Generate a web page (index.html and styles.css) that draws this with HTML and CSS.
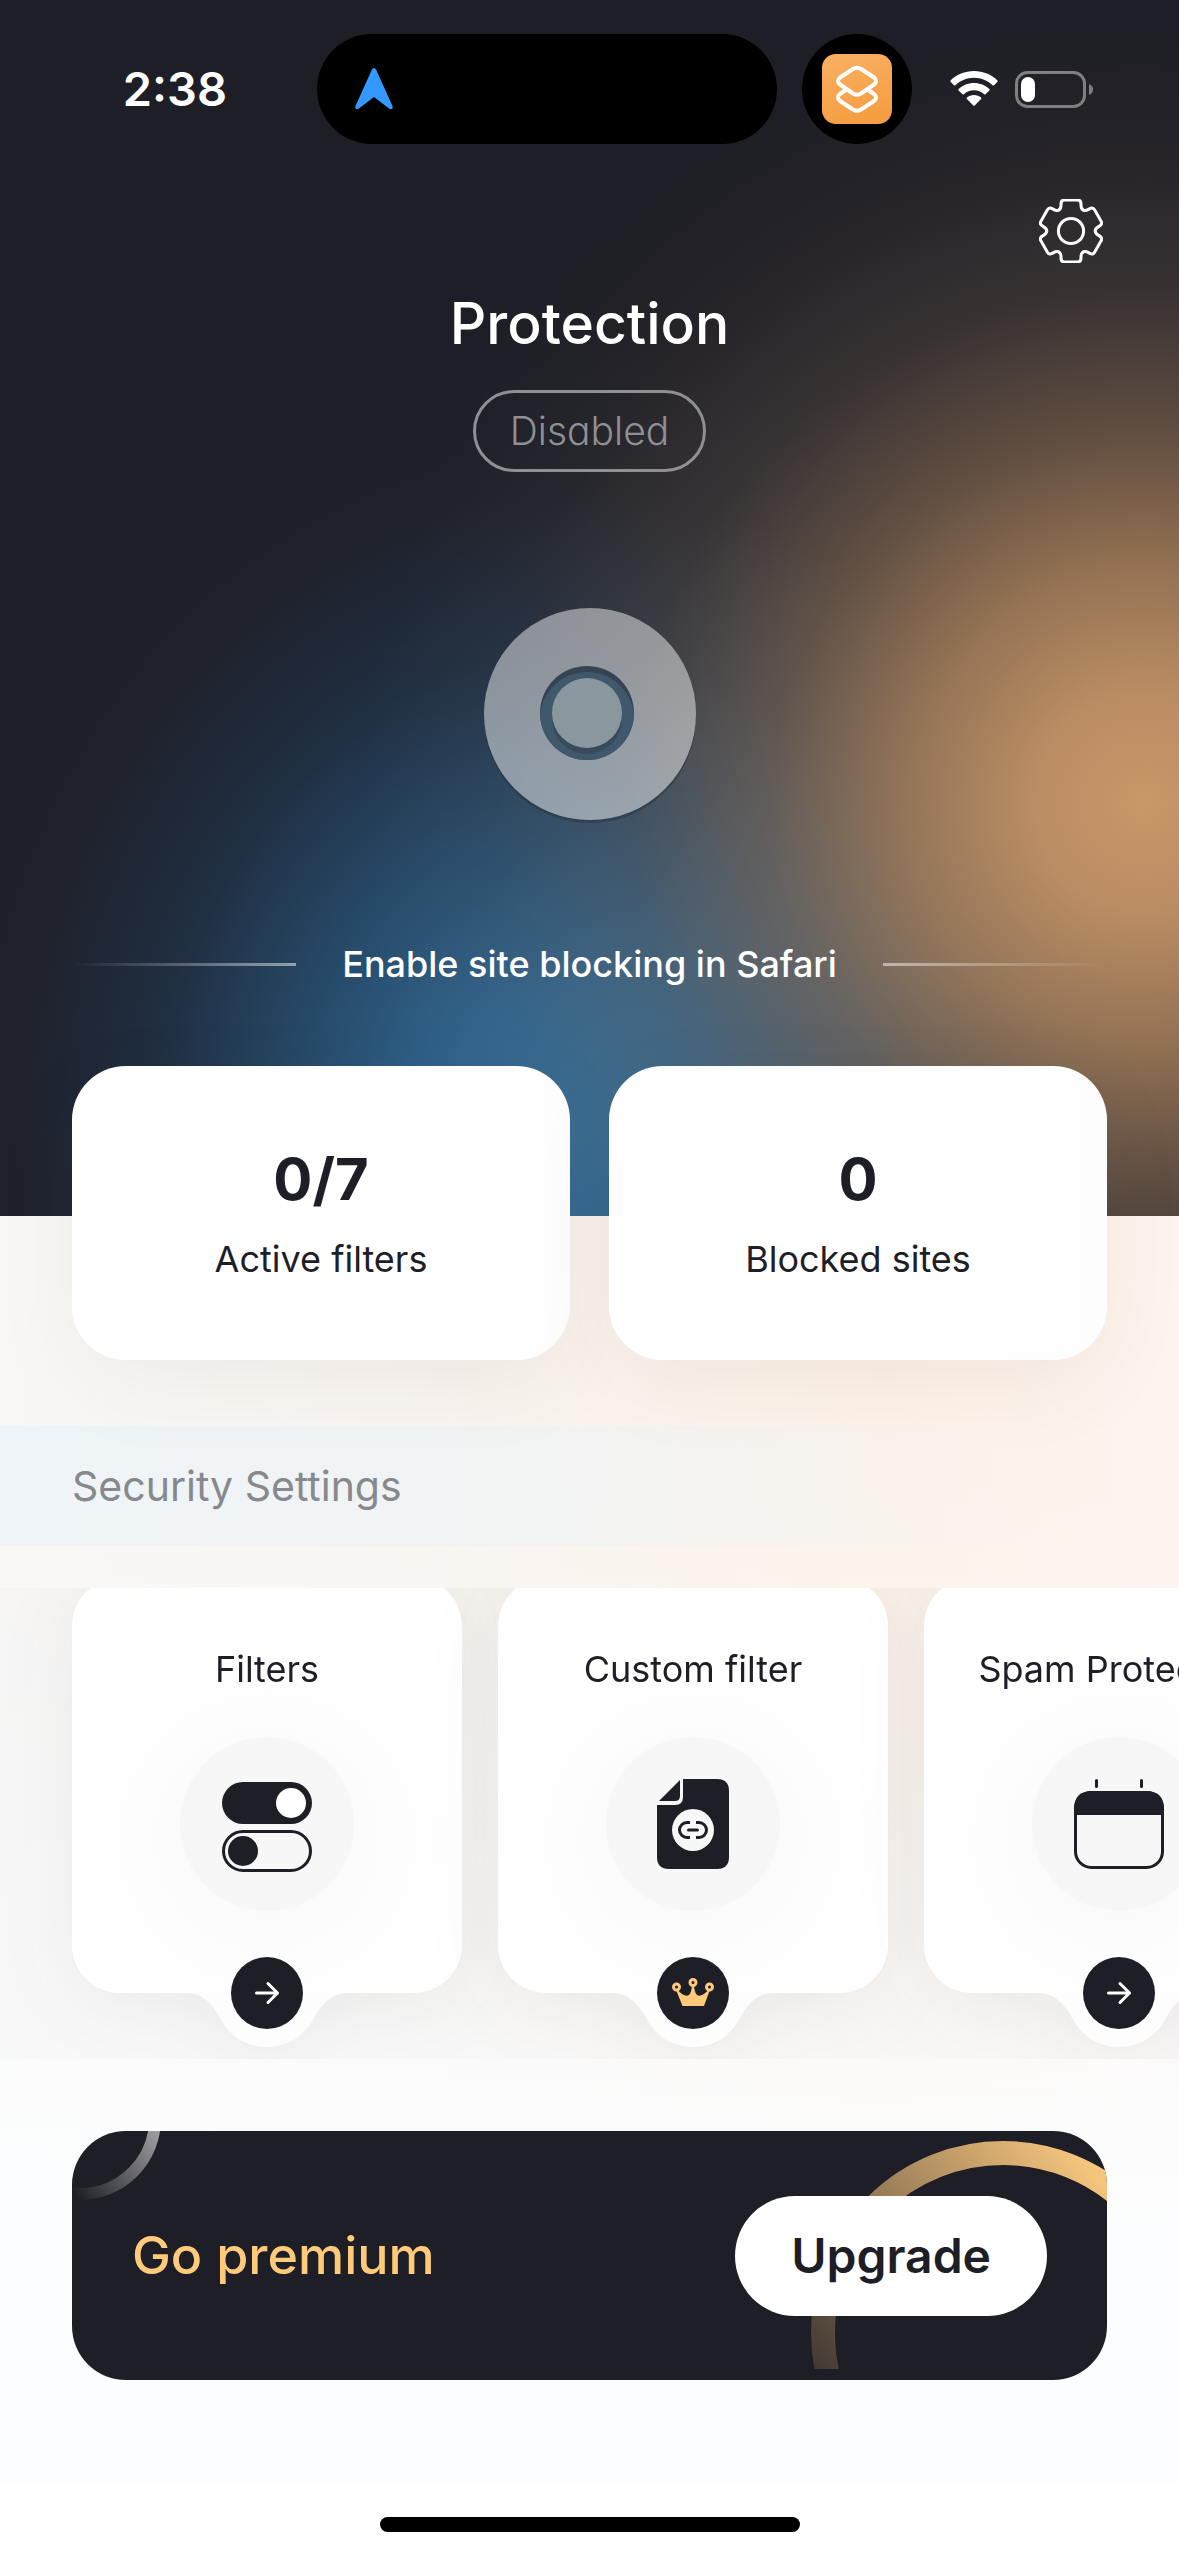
FILE: index.html
```html
<!DOCTYPE html>
<html lang="en">
<head>
<meta charset="utf-8">
<meta name="viewport" content="width=device-width, initial-scale=1">
<title>Protection</title>
<link rel="stylesheet" href="styles.css">
</head>
<body>
<svg class="defs" width="0" height="0" aria-hidden="true">
  <defs>
    <path id="tooth" d="M-12.1-21C-10.4-22-10-24-10-26V-27Q-10-31-6.500-31H6.500Q10-31 10-27V-26C10-24 10.400-22 12.100-21"/>
    <g id="arrow"><path d="M25.500 36H46.500M37 26.500L46.500 36L37 45.500" fill="none" stroke="#fff" stroke-width="3" stroke-linecap="round" stroke-linejoin="round"/></g>
    <path id="tail" d="M0 0H160V1C146 1 135 11 128 24C118 44 101 55 80 55S42 44 32 24C25 11 14 1 0 1Z"/>
  </defs>
</svg>
<div class="app">
  <header class="hero">
    <div class="status">
      <span class="time">2:38</span>
      <div class="islands">
        <div class="island">
          <svg width="40" height="44" viewBox="0 0 40 44" aria-hidden="true"><path d="M20 1C21 1 22 2 22.500 3.500L38.500 39C39.500 42 37 43 35 41.500L20 30L5 41.500C3 43 .5 42 1.500 39L17.500 3.500C18 2 19 1 20 1Z" fill="#3398ff"/></svg>
        </div>
        <div class="island island-round">
          <svg width="70" height="70" viewBox="0 0 70 70" aria-hidden="true">
            <defs><linearGradient id="tile" x1="0" y1="0" x2=".3" y2="1"><stop offset="0" stop-color="#fab064"/><stop offset="1" stop-color="#f59f42"/></linearGradient></defs>
            <rect width="70" height="70" rx="14" fill="url(#tile)"/>
            <g fill="none" stroke="#fff" stroke-width="4" stroke-linejoin="round" stroke-linecap="round">
              <path d="M24.500 35.500L18 40Q14 43.500 18 47L31 55.500Q35 58 39 55.500L52 47Q56 43.500 52 40L45.500 35.500"/>
              <path d="M31 15Q35 12.500 39 15L52 23.500Q56 27 52 30.500L39 39.500Q35 42 31 39.500L18 30.500Q14 27 18 23.500Z"/>
            </g>
          </svg>
        </div>
      </div>
      <div class="indicators">
        <svg width="48" height="36" viewBox="0 0 48 36" aria-hidden="true"><g fill="#fff"><path d="M24 0C33 0 41.500 3.500 47.500 9.500Q48 10.200 47.500 10.800L44 14.300Q43.300 14.800 42.600 14.300C37.500 9.500 31 6.800 24 6.800S10.500 9.500 5.400 14.300Q4.700 14.800 4 14.300L.5 10.800Q0 10.200.5 9.500C6.500 3.500 15 0 24 0Z"/><path d="M24 12C30 12 35.400 14.300 39.400 18Q40 18.700 39.400 19.400L35.500 23.200Q34.900 23.700 34.200 23.200C31.400 20.700 27.900 19.200 24 19.200S16.600 20.700 13.800 23.200Q13.100 23.700 12.500 23.200L8.600 19.400Q8 18.700 8.600 18C12.600 14.300 18 12 24 12Z"/><path d="M24 24C26.700 24 29.200 25 31.100 26.600Q31.700 27.200 31.100 27.900L24.700 34.400Q24 35.100 23.300 34.400L16.900 27.900Q16.300 27.200 16.900 26.600C18.800 25 21.300 24 24 24Z"/></g></svg>
        <svg width="78" height="37" viewBox="0 0 78 37" aria-hidden="true"><rect x="1.500" y="1.500" width="68" height="34" rx="11" fill="none" stroke="#808084" stroke-width="3"/><rect x="6" y="6" width="14" height="25" rx="7" fill="#fff"/><path d="M74 13Q78 15 78 18.500T74 24Z" fill="#808084"/></svg>
      </div>
    </div>
    <div class="toolbar">
      <button class="icon-button" type="button" aria-label="Settings">
        <svg width="64" height="64" viewBox="-32 -32 64 64" aria-hidden="true"><g fill="none" stroke="#fff" stroke-width="3" stroke-linecap="round" stroke-linejoin="round"><use href="#tooth"/><use href="#tooth" transform="rotate(60)"/><use href="#tooth" transform="rotate(120)"/><use href="#tooth" transform="rotate(180)"/><use href="#tooth" transform="rotate(240)"/><use href="#tooth" transform="rotate(300)"/><circle r="12.600"/></g></svg>
      </button>
    </div>
    <h1 class="title">Protection</h1>
    <p class="state">Disabled</p>
    <button class="power" type="button" aria-label="Turn protection on">
      <svg width="94" height="94" viewBox="0 0 94 94" aria-hidden="true">
        <defs><clipPath id="well"><circle cx="47" cy="47" r="47"/></clipPath></defs>
        <circle cx="47" cy="47" r="47" fill="#364352"/>
        <g clip-path="url(#well)"><circle cx="47" cy="53" r="47" fill="#40586c"/></g>
        <circle cx="47" cy="53" r="35" fill="#384b5c"/>
        <circle cx="47" cy="47" r="35" fill="#8b979f"/>
      </svg>
    </button>
    <p class="hint">Enable site blocking in Safari</p>
  </header>

  <main class="content">
    <dl class="stats">
      <div class="stat"><dt>Active filters</dt><dd>0/7</dd></div>
      <div class="stat"><dt>Blocked sites</dt><dd>0</dd></div>
    </dl>

    <h2 class="section">Security Settings</h2>

    <ul class="tiles">
      <li class="tile">
        <div class="tile-body">
          <h3>Filters</h3>
          <div class="disc">
            <svg width="90" height="96" viewBox="0 -6 90 96" aria-hidden="true"><rect width="90" height="42" rx="21" fill="#1e1e26"/><circle cx="69" cy="21" r="15" fill="#fff"/><rect x="1.500" y="49.500" width="87" height="39" rx="19.500" fill="none" stroke="#1e1e26" stroke-width="3"/><circle cx="21" cy="69" r="15" fill="#1e1e26"/></svg>
          </div>
        </div>
        <div class="tail">
          <svg width="160" height="55" viewBox="0 0 160 55" aria-hidden="true"><use href="#tail" fill="#fdfdfd"/></svg>
          <button class="go" type="button" aria-label="Open Filters"><svg width="72" height="72" viewBox="0 0 72 72" aria-hidden="true"><use href="#arrow"/></svg></button>
        </div>
      </li>
      <li class="tile">
        <div class="tile-body">
          <h3>Custom filter</h3>
          <div class="disc">
            <svg width="72" height="90" viewBox="0 0 72 90" aria-hidden="true"><path d="M26 0H60Q72 0 72 12V78Q72 90 60 90H12Q0 90 0 78V26H18Q26 26 26 18Z" fill="#1e1e26"/><path d="M23 1V17Q23 22 18 22H2Z" fill="#1e1e26"/><circle cx="36" cy="51" r="21" fill="#f7f7f7"/><path d="M33 43.500H30A7.500 7.500 0 0 0 30 58.500H33M39 43.500H42A7.500 7.500 0 0 1 42 58.500H39" fill="none" stroke="#1e1e26" stroke-width="3"/><path d="M31.500 51H40.500" stroke="#1e1e26" stroke-width="3" stroke-linecap="round"/></svg>
          </div>
        </div>
        <div class="tail">
          <svg width="160" height="55" viewBox="0 0 160 55" aria-hidden="true"><use href="#tail" fill="#fdfdfd"/></svg>
          <button class="go" type="button" aria-label="Unlock Custom filter"><svg width="72" height="72" viewBox="0 0 72 72" aria-hidden="true"><path d="M21 33C24 37 29 40 32 38C34 36 34.500 32 35 29H37C37.500 32 38 36 40 38C43 40 48 37 51 33L52.500 34L47 49H25.500L19.500 34Z" fill="#ffca7a"/><g fill="#1e1e26" stroke="#ffca7a" stroke-width="3"><circle cx="19.500" cy="30" r="3"/><circle cx="36" cy="25.500" r="3"/><circle cx="52.500" cy="30" r="3"/></g></svg></button>
        </div>
      </li>
      <li class="tile">
        <div class="tile-body">
          <h3>Spam Protection</h3>
          <div class="disc">
            <svg width="90" height="90" viewBox="0 0 90 90" aria-hidden="true"><rect x="1.500" y="13.500" width="87" height="75" rx="16" fill="none" stroke="#1e1e26" stroke-width="3"/><path d="M0 36V30Q0 12 18 12H72Q90 12 90 30V36Z" fill="#1e1e26"/><path d="M22.500 1.500V7.500M67.500 1.500V7.500" stroke="#1e1e26" stroke-width="3" stroke-linecap="round"/></svg>
          </div>
        </div>
        <div class="tail">
          <svg width="160" height="55" viewBox="0 0 160 55" aria-hidden="true"><use href="#tail" fill="#fdfdfd"/></svg>
          <button class="go" type="button" aria-label="Open Spam Protection"><svg width="72" height="72" viewBox="0 0 72 72" aria-hidden="true"><use href="#arrow"/></svg></button>
        </div>
      </li>
    </ul>

    <section class="premium">
      <svg class="ring-silver" width="90" height="70" viewBox="0 0 90 70" aria-hidden="true"><defs><linearGradient id="silver" gradientUnits="userSpaceOnUse" x1="88" y1="0" x2="4" y2="66"><stop offset="0" stop-color="#a0a0a4"/><stop offset="1" stop-color="#a0a0a4" stop-opacity="0"/></linearGradient></defs><circle cx="8" cy="-12" r="75" fill="none" stroke="url(#silver)" stroke-width="12"/></svg>
      <svg class="ring-gold" width="297" height="238" viewBox="0 0 297 238" aria-hidden="true"><defs><linearGradient id="gold" gradientUnits="userSpaceOnUse" x1="280" y1="40" x2="-30" y2="300"><stop offset="0" stop-color="#f5c47d"/><stop offset="1" stop-color="#f5c47d" stop-opacity="0"/></linearGradient></defs><circle cx="193" cy="202" r="180" fill="none" stroke="url(#gold)" stroke-width="24"/></svg>
      <h2>Go premium</h2>
      <button class="upgrade" type="button">Upgrade</button>
    </section>
  </main>
  <footer class="home"><span class="home-bar"></span></footer>
</div>
</body>
</html>
```
FILE: styles.css
```css
* { box-sizing: border-box; margin: 0; padding: 0; }

body {
  background: #fff;
  color: #1e1e26;
  font-family: Inter, "Liberation Sans", sans-serif;
}

button { border: 0; cursor: pointer; font: inherit; color: inherit; }
svg { display: block; }
.defs { position: absolute; }
.app { display: flex; flex-direction: column; overflow: hidden; }

/* Hero */
.hero {
  display: flex;
  flex-direction: column;
  align-items: center;
  padding: 34px 0 228px;
  color: #fff;
  background:
    radial-gradient(ellipse 66% 64% at 97% 66%, rgba(204, 154, 107, .98) 0%, rgba(200, 150, 104, .92) 14%, rgba(186, 141, 98, .76) 30%, rgba(160, 124, 92, .5) 48%, rgba(130, 105, 84, .26) 66%, rgba(100, 85, 70, .1) 84%, rgba(80, 70, 60, 0) 100%),
    radial-gradient(ellipse 60% 66% at 49% 93%, #36719d 0%, #316690 18%, rgba(42, 88, 126, .8) 38%, rgba(35, 66, 98, .46) 60%, rgba(32, 48, 66, .18) 80%, rgba(30, 30, 38, 0) 100%),
    #1e1e26;
}

.status {
  display: grid;
  grid-template-columns: 317fr 595px 267fr;
  align-items: center;
  align-self: stretch;
  height: 110px;
}
.time { justify-self: end; padding-right: 90px; font-size: 47px; font-weight: 600; line-height: 60px; }
.islands { display: flex; justify-content: space-between; }
.island { display: flex; align-items: center; width: 460px; height: 110px; padding-left: 37px; border-radius: 55px; background: #000; }
.island-round { justify-content: center; width: 110px; padding: 0; }
.indicators { display: flex; align-items: center; gap: 17px; padding-left: 38px; }

.toolbar { display: flex; justify-content: flex-end; align-self: stretch; margin-top: 55px; padding-right: 76px; }
.icon-button { background: none; }

.title { margin-top: 25px; font-size: 57px; font-weight: 500; line-height: 72px; }
.state {
  margin-top: 30px;
  padding: 0 34px;
  border: 3px solid #8f9094;
  border-radius: 42px;
  color: #8f9094;
  font-size: 39px;
  font-weight: 300;
  line-height: 76px;
  font-feature-settings: "cv11";
}
.power {
  display: grid;
  place-items: center;
  width: 212px;
  height: 212px;
  margin-top: 136px;
  padding: 0 5px 3px 0;
  border-radius: 50%;
  background: rgba(255, 255, 255, .47);
  box-shadow: 0 3px 0 rgba(40, 50, 60, .5);
}
.hint {
  display: flex;
  align-items: center;
  gap: 46px;
  align-self: stretch;
  margin-top: 120px;
  padding: 0 72px;
  font-size: 36px;
  font-weight: 500;
  line-height: 48px;
}
.hint::before, .hint::after { content: ""; flex: 1; height: 3px; background: linear-gradient(90deg, rgba(255, 255, 255, 0), rgba(255, 255, 255, .5)); }
.hint::after { background: linear-gradient(270deg, rgba(255, 255, 255, 0), rgba(255, 255, 255, .5)); }

/* Lower panel */
.content {
  padding-bottom: 104px;
  background:
    linear-gradient(180deg, rgba(252, 253, 254, 0) 20%, #fcfdfe 80%),
    linear-gradient(90deg, #f9f8f7 0%, #f9f4ef 40%, #fdf2e8 75%, #fdf4ee 100%);
}

.stats { position: relative; display: grid; grid-template-columns: 1fr 1fr; gap: 39px; margin-top: -150px; padding: 0 72px; }
.stat {
  display: flex;
  flex-direction: column-reverse;
  justify-content: center;
  gap: 20px;
  height: 294px;
  border-radius: 54px;
  background: linear-gradient(90deg, #fff 75%, #fdfdfd);
  box-shadow: 0 24px 90px rgba(60, 50, 30, .06);
  text-align: center;
}
.stat dt { font-size: 36px; line-height: 48px; }
.stat dd { font-size: 58px; font-weight: 700; line-height: 72px; }

.section {
  margin-top: 66px;
  padding: 0 72px;
  background: linear-gradient(90deg, #eef4f8, rgba(240, 243, 243, .8) 50%, rgba(245, 243, 240, 0) 90%);
  color: #88898d;
  font-size: 41px;
  font-weight: 400;
  line-height: 120px;
}

.tiles { display: flex; gap: 36px; margin-top: 42px; padding: 0 72px 12px; overflow-x: auto; scrollbar-width: none; list-style: none; background: rgba(90, 90, 80, .015); }
.tile { display: flex; flex: 0 0 390px; flex-direction: column; align-items: center; margin-top: -10px; filter: drop-shadow(0 12px 36px rgba(60, 60, 50, .07)); }
.tile-body {
  display: flex;
  flex-direction: column;
  align-items: center;
  align-self: stretch;
  gap: 44px;
  height: 415px;
  padding-top: 67px;
  border-radius: 48px;
  background: radial-gradient(circle at 50% 63%, #fbfbfb 22%, #fff 60%);
}
.tile h3 { font-size: 36px; font-weight: 400; line-height: 48px; white-space: nowrap; }
.disc { display: grid; place-items: center; width: 174px; height: 174px; border-radius: 50%; background: #f7f7f7; }
.tail { position: relative; margin-top: -1px; }
.go { position: absolute; left: 44px; top: -35px; width: 72px; height: 72px; border-radius: 50%; background: #1e1e26; }

.premium {
  position: relative;
  display: flex;
  align-items: center;
  justify-content: space-between;
  height: 249px;
  margin: 72px 72px 0;
  padding: 0 60px;
  overflow: hidden;
  border-radius: 54px;
  background: #1e1e26;
}
.premium h2 { color: #ffca7a; font-size: 52px; font-weight: 500; line-height: 72px; }
.ring-silver { position: absolute; left: 0; top: 0; }
.ring-gold { position: absolute; right: 0; top: 0; }
.upgrade { position: relative; height: 120px; padding: 0 56px; border-radius: 60px; background: #fff; font-size: 48px; font-weight: 600; }

.home { display: flex; justify-content: center; padding: 33px 0 24px; background: #fff; }
.home-bar { width: 420px; max-width: 60%; height: 15px; border-radius: 8px; background: #000; }
```
